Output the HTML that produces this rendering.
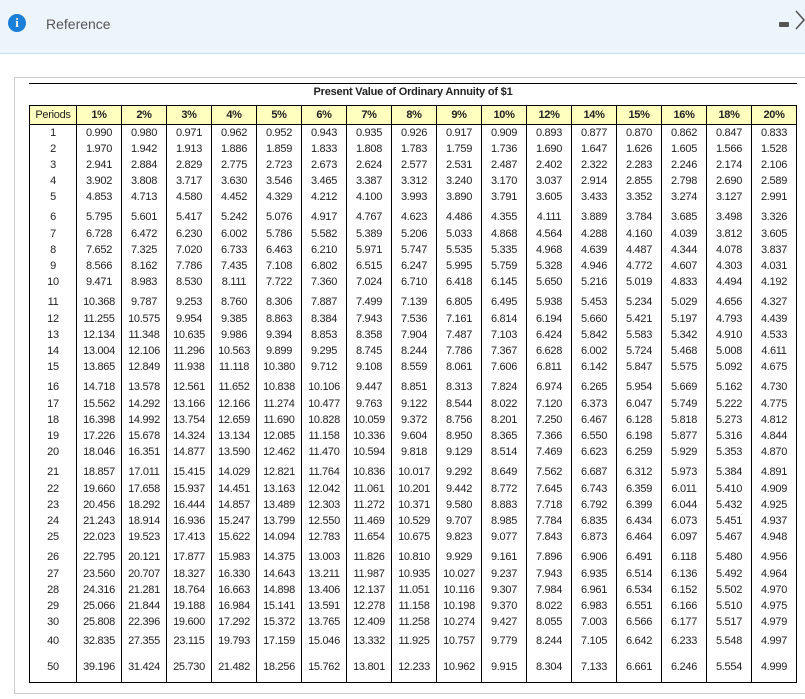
<!DOCTYPE html>
<html><head><meta charset="utf-8"><style>
*{margin:0;padding:0;box-sizing:border-box}
body{width:805px;height:699px;background:#fff;font-family:"Liberation Sans",Arial,sans-serif;overflow:hidden;position:relative}
.bar{position:absolute;left:0;top:0;width:805px;height:54px;background:#eef4fc;border-bottom:1px solid #c9e1f6}
.ic{position:absolute;left:8px;top:14px;width:18px;height:18px;border-radius:50%;background:#1a7fd8;color:#fff;font:bold 13px/18px "Liberation Serif",serif;text-align:center}
.ref{position:absolute;left:46px;top:16px;font-size:14px;color:#555}
.min{position:absolute;left:779px;top:22px;width:10px;height:5px;background:#555;border-radius:1px}
.chev{position:absolute;left:794px;top:9px}
.box{position:absolute;left:14px;top:77px;width:800px;height:617px;border:1px solid #ccc}
.line{position:absolute;left:29px;top:83px;width:768px;height:1px;background:#000}
.title{position:absolute;left:29px;top:84px;width:768px;text-align:center;font-size:11px;font-weight:bold;color:#222;line-height:16px;letter-spacing:-0.2px}
table{position:absolute;left:29px;top:105px;border-collapse:collapse;table-layout:fixed;width:768px;font-size:11px;color:#222}
td{text-align:center;border-left:1px solid #000;border-right:1px solid #000;height:16px;line-height:12px;padding:0;white-space:nowrap;letter-spacing:-0.3px}
tr.h td{background:#ffffc0;border:1px solid #000;height:19px;font-weight:bold}
tr.h td:first-child{font-weight:normal}
tr.g td{height:21px;vertical-align:bottom;padding-bottom:3px}
tr.f td{height:22px}
tr.l td{height:31px;border-bottom:1px solid #000}
</style></head><body>
<div class="bar"><div class="ic">i</div><div class="ref">Reference</div><div class="min"></div>
<svg class="chev" width="12" height="22" viewBox="0 0 12 22"><path d="M2 2 L10 11 L2 20" fill="none" stroke="#555" stroke-width="1.6"/></svg></div>
<div class="box"></div>
<div class="line"></div>
<div class="title">Present Value of Ordinary Annuity of $1</div>
<table>
<colgroup><col style="width:47px"><col span="16" style="width:45px"></colgroup>
<tr class="h"><td>Periods</td><td>1%</td><td>2%</td><td>3%</td><td>4%</td><td>5%</td><td>6%</td><td>7%</td><td>8%</td><td>9%</td><td>10%</td><td>12%</td><td>14%</td><td>15%</td><td>16%</td><td>18%</td><td>20%</td></tr>
<tr><td>1</td><td>0.990</td><td>0.980</td><td>0.971</td><td>0.962</td><td>0.952</td><td>0.943</td><td>0.935</td><td>0.926</td><td>0.917</td><td>0.909</td><td>0.893</td><td>0.877</td><td>0.870</td><td>0.862</td><td>0.847</td><td>0.833</td></tr>
<tr><td>2</td><td>1.970</td><td>1.942</td><td>1.913</td><td>1.886</td><td>1.859</td><td>1.833</td><td>1.808</td><td>1.783</td><td>1.759</td><td>1.736</td><td>1.690</td><td>1.647</td><td>1.626</td><td>1.605</td><td>1.566</td><td>1.528</td></tr>
<tr><td>3</td><td>2.941</td><td>2.884</td><td>2.829</td><td>2.775</td><td>2.723</td><td>2.673</td><td>2.624</td><td>2.577</td><td>2.531</td><td>2.487</td><td>2.402</td><td>2.322</td><td>2.283</td><td>2.246</td><td>2.174</td><td>2.106</td></tr>
<tr><td>4</td><td>3.902</td><td>3.808</td><td>3.717</td><td>3.630</td><td>3.546</td><td>3.465</td><td>3.387</td><td>3.312</td><td>3.240</td><td>3.170</td><td>3.037</td><td>2.914</td><td>2.855</td><td>2.798</td><td>2.690</td><td>2.589</td></tr>
<tr><td>5</td><td>4.853</td><td>4.713</td><td>4.580</td><td>4.452</td><td>4.329</td><td>4.212</td><td>4.100</td><td>3.993</td><td>3.890</td><td>3.791</td><td>3.605</td><td>3.433</td><td>3.352</td><td>3.274</td><td>3.127</td><td>2.991</td></tr>
<tr class="g"><td>6</td><td>5.795</td><td>5.601</td><td>5.417</td><td>5.242</td><td>5.076</td><td>4.917</td><td>4.767</td><td>4.623</td><td>4.486</td><td>4.355</td><td>4.111</td><td>3.889</td><td>3.784</td><td>3.685</td><td>3.498</td><td>3.326</td></tr>
<tr><td>7</td><td>6.728</td><td>6.472</td><td>6.230</td><td>6.002</td><td>5.786</td><td>5.582</td><td>5.389</td><td>5.206</td><td>5.033</td><td>4.868</td><td>4.564</td><td>4.288</td><td>4.160</td><td>4.039</td><td>3.812</td><td>3.605</td></tr>
<tr><td>8</td><td>7.652</td><td>7.325</td><td>7.020</td><td>6.733</td><td>6.463</td><td>6.210</td><td>5.971</td><td>5.747</td><td>5.535</td><td>5.335</td><td>4.968</td><td>4.639</td><td>4.487</td><td>4.344</td><td>4.078</td><td>3.837</td></tr>
<tr><td>9</td><td>8.566</td><td>8.162</td><td>7.786</td><td>7.435</td><td>7.108</td><td>6.802</td><td>6.515</td><td>6.247</td><td>5.995</td><td>5.759</td><td>5.328</td><td>4.946</td><td>4.772</td><td>4.607</td><td>4.303</td><td>4.031</td></tr>
<tr><td>10</td><td>9.471</td><td>8.983</td><td>8.530</td><td>8.111</td><td>7.722</td><td>7.360</td><td>7.024</td><td>6.710</td><td>6.418</td><td>6.145</td><td>5.650</td><td>5.216</td><td>5.019</td><td>4.833</td><td>4.494</td><td>4.192</td></tr>
<tr class="g"><td>11</td><td>10.368</td><td>9.787</td><td>9.253</td><td>8.760</td><td>8.306</td><td>7.887</td><td>7.499</td><td>7.139</td><td>6.805</td><td>6.495</td><td>5.938</td><td>5.453</td><td>5.234</td><td>5.029</td><td>4.656</td><td>4.327</td></tr>
<tr><td>12</td><td>11.255</td><td>10.575</td><td>9.954</td><td>9.385</td><td>8.863</td><td>8.384</td><td>7.943</td><td>7.536</td><td>7.161</td><td>6.814</td><td>6.194</td><td>5.660</td><td>5.421</td><td>5.197</td><td>4.793</td><td>4.439</td></tr>
<tr><td>13</td><td>12.134</td><td>11.348</td><td>10.635</td><td>9.986</td><td>9.394</td><td>8.853</td><td>8.358</td><td>7.904</td><td>7.487</td><td>7.103</td><td>6.424</td><td>5.842</td><td>5.583</td><td>5.342</td><td>4.910</td><td>4.533</td></tr>
<tr><td>14</td><td>13.004</td><td>12.106</td><td>11.296</td><td>10.563</td><td>9.899</td><td>9.295</td><td>8.745</td><td>8.244</td><td>7.786</td><td>7.367</td><td>6.628</td><td>6.002</td><td>5.724</td><td>5.468</td><td>5.008</td><td>4.611</td></tr>
<tr><td>15</td><td>13.865</td><td>12.849</td><td>11.938</td><td>11.118</td><td>10.380</td><td>9.712</td><td>9.108</td><td>8.559</td><td>8.061</td><td>7.606</td><td>6.811</td><td>6.142</td><td>5.847</td><td>5.575</td><td>5.092</td><td>4.675</td></tr>
<tr class="g"><td>16</td><td>14.718</td><td>13.578</td><td>12.561</td><td>11.652</td><td>10.838</td><td>10.106</td><td>9.447</td><td>8.851</td><td>8.313</td><td>7.824</td><td>6.974</td><td>6.265</td><td>5.954</td><td>5.669</td><td>5.162</td><td>4.730</td></tr>
<tr><td>17</td><td>15.562</td><td>14.292</td><td>13.166</td><td>12.166</td><td>11.274</td><td>10.477</td><td>9.763</td><td>9.122</td><td>8.544</td><td>8.022</td><td>7.120</td><td>6.373</td><td>6.047</td><td>5.749</td><td>5.222</td><td>4.775</td></tr>
<tr><td>18</td><td>16.398</td><td>14.992</td><td>13.754</td><td>12.659</td><td>11.690</td><td>10.828</td><td>10.059</td><td>9.372</td><td>8.756</td><td>8.201</td><td>7.250</td><td>6.467</td><td>6.128</td><td>5.818</td><td>5.273</td><td>4.812</td></tr>
<tr><td>19</td><td>17.226</td><td>15.678</td><td>14.324</td><td>13.134</td><td>12.085</td><td>11.158</td><td>10.336</td><td>9.604</td><td>8.950</td><td>8.365</td><td>7.366</td><td>6.550</td><td>6.198</td><td>5.877</td><td>5.316</td><td>4.844</td></tr>
<tr><td>20</td><td>18.046</td><td>16.351</td><td>14.877</td><td>13.590</td><td>12.462</td><td>11.470</td><td>10.594</td><td>9.818</td><td>9.129</td><td>8.514</td><td>7.469</td><td>6.623</td><td>6.259</td><td>5.929</td><td>5.353</td><td>4.870</td></tr>
<tr class="g"><td>21</td><td>18.857</td><td>17.011</td><td>15.415</td><td>14.029</td><td>12.821</td><td>11.764</td><td>10.836</td><td>10.017</td><td>9.292</td><td>8.649</td><td>7.562</td><td>6.687</td><td>6.312</td><td>5.973</td><td>5.384</td><td>4.891</td></tr>
<tr><td>22</td><td>19.660</td><td>17.658</td><td>15.937</td><td>14.451</td><td>13.163</td><td>12.042</td><td>11.061</td><td>10.201</td><td>9.442</td><td>8.772</td><td>7.645</td><td>6.743</td><td>6.359</td><td>6.011</td><td>5.410</td><td>4.909</td></tr>
<tr><td>23</td><td>20.456</td><td>18.292</td><td>16.444</td><td>14.857</td><td>13.489</td><td>12.303</td><td>11.272</td><td>10.371</td><td>9.580</td><td>8.883</td><td>7.718</td><td>6.792</td><td>6.399</td><td>6.044</td><td>5.432</td><td>4.925</td></tr>
<tr><td>24</td><td>21.243</td><td>18.914</td><td>16.936</td><td>15.247</td><td>13.799</td><td>12.550</td><td>11.469</td><td>10.529</td><td>9.707</td><td>8.985</td><td>7.784</td><td>6.835</td><td>6.434</td><td>6.073</td><td>5.451</td><td>4.937</td></tr>
<tr><td>25</td><td>22.023</td><td>19.523</td><td>17.413</td><td>15.622</td><td>14.094</td><td>12.783</td><td>11.654</td><td>10.675</td><td>9.823</td><td>9.077</td><td>7.843</td><td>6.873</td><td>6.464</td><td>6.097</td><td>5.467</td><td>4.948</td></tr>
<tr class="g"><td>26</td><td>22.795</td><td>20.121</td><td>17.877</td><td>15.983</td><td>14.375</td><td>13.003</td><td>11.826</td><td>10.810</td><td>9.929</td><td>9.161</td><td>7.896</td><td>6.906</td><td>6.491</td><td>6.118</td><td>5.480</td><td>4.956</td></tr>
<tr><td>27</td><td>23.560</td><td>20.707</td><td>18.327</td><td>16.330</td><td>14.643</td><td>13.211</td><td>11.987</td><td>10.935</td><td>10.027</td><td>9.237</td><td>7.943</td><td>6.935</td><td>6.514</td><td>6.136</td><td>5.492</td><td>4.964</td></tr>
<tr><td>28</td><td>24.316</td><td>21.281</td><td>18.764</td><td>16.663</td><td>14.898</td><td>13.406</td><td>12.137</td><td>11.051</td><td>10.116</td><td>9.307</td><td>7.984</td><td>6.961</td><td>6.534</td><td>6.152</td><td>5.502</td><td>4.970</td></tr>
<tr><td>29</td><td>25.066</td><td>21.844</td><td>19.188</td><td>16.984</td><td>15.141</td><td>13.591</td><td>12.278</td><td>11.158</td><td>10.198</td><td>9.370</td><td>8.022</td><td>6.983</td><td>6.551</td><td>6.166</td><td>5.510</td><td>4.975</td></tr>
<tr><td>30</td><td>25.808</td><td>22.396</td><td>19.600</td><td>17.292</td><td>15.372</td><td>13.765</td><td>12.409</td><td>11.258</td><td>10.274</td><td>9.427</td><td>8.055</td><td>7.003</td><td>6.566</td><td>6.177</td><td>5.517</td><td>4.979</td></tr>
<tr class="f"><td>40</td><td>32.835</td><td>27.355</td><td>23.115</td><td>19.793</td><td>17.159</td><td>15.046</td><td>13.332</td><td>11.925</td><td>10.757</td><td>9.779</td><td>8.244</td><td>7.105</td><td>6.642</td><td>6.233</td><td>5.548</td><td>4.997</td></tr>
<tr class="l"><td>50</td><td>39.196</td><td>31.424</td><td>25.730</td><td>21.482</td><td>18.256</td><td>15.762</td><td>13.801</td><td>12.233</td><td>10.962</td><td>9.915</td><td>8.304</td><td>7.133</td><td>6.661</td><td>6.246</td><td>5.554</td><td>4.999</td></tr>
</table>
</body></html>
